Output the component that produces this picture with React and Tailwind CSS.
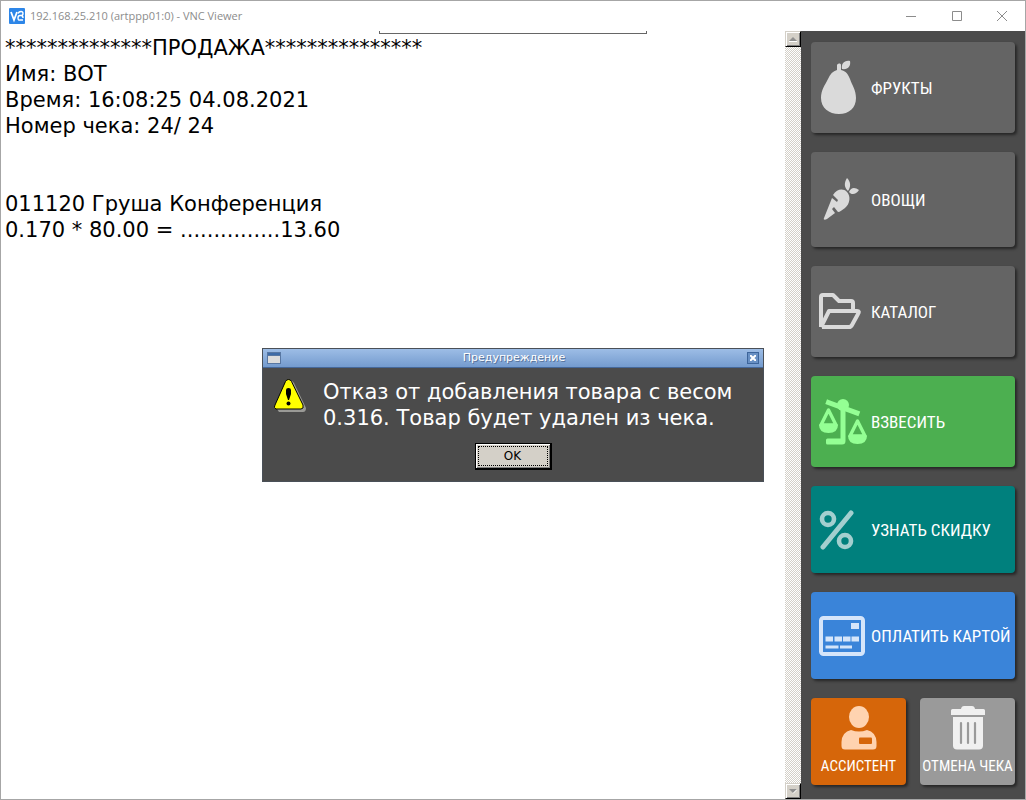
import React from "react";

const buttonBase =
  "flex shrink-0 items-center rounded text-left text-white shadow-[2px_2px_3px_rgba(0,0,0,0.5)]";
const labelFont =
  "font-['Roboto_Condensed','Open_Sans_Condensed','Liberation_Sans_Narrow','DejaVu_Sans_Condensed',sans-serif] whitespace-nowrap";

function PearIcon() {
  return (
    <svg className="ml-[2px]" width="36" height="56" viewBox="0 0 36 56" fill="#dadada" aria-hidden="true">
      <path d="M16 5c1-2 4-2 4 0v5c5 1 7 4 9 9 2 6 6 11 6 19 0 10-7 16-17 16S0 48 0 38c0-8 4-13 7-19 2-5 5-8 9-9z" />
      <path d="M21 9c-1-5 2-9 8-8 1 5-2 9-8 8z" />
    </svg>
  );
}

function CarrotIcon() {
  return (
    <svg className="ml-1" width="36" height="44" viewBox="0 0 36 44" fill="#dadada" aria-hidden="true">
      <path d="M1 40 9 20l5 4 1-2-5-5c4-6 10-7 14-3 4 4 3 12-2 16-3 2-5 4-7 4l-4-5-2 2 3 4-8 6c-2 1-4 1-3-1z" />
      <path d="M25 13c-4-4-4-8-1-13 4 4 4 9 1 13zM26 14c2-5 6-5 10-2-3 5-8 5-10 2z" />
    </svg>
  );
}

function FolderIcon() {
  return (
    <svg width="42" height="37" viewBox="0 0 42 37" fill="none" stroke="#dadada" strokeWidth="4" strokeLinejoin="round" aria-hidden="true">
      <path d="M2 34V4q0-2 2-2h10l6 6h12q2 0 2 2v6" />
      <path d="m2 34 8-16h28q3 0 1 3l-6 11q-1 2-3 2H3" />
    </svg>
  );
}

function ScalesIcon() {
  return (
    <svg width="48" height="46" viewBox="0 0 48 46" fill="#94ff94" aria-hidden="true">
      <circle cx="24" cy="6" r="6" />
      <path d="M9.500 3.500 38 14" stroke="#94ff94" strokeWidth="5" strokeLinecap="square" />
      <path d="M21.500 6h5v36q0 3.500-3.500 3.500H8.500q-1.500 0-1.500-1.500v-3q0-1.500 1.500-1.500h13z" />
      <path d="M9.500 11 2 26h15z" fill="none" stroke="#94ff94" strokeWidth="3.400" strokeLinejoin="round" />
      <path d="M0 25.500h19q0 8.500-9.500 8.500T0 25.500z" />
      <path d="M38.500 22 31 37h15z" fill="none" stroke="#94ff94" strokeWidth="3.400" strokeLinejoin="round" />
      <path d="M29 36.500h19q0 8.500-9.500 8.500T29 36.500z" />
    </svg>
  );
}

function PercentIcon() {
  return (
    <svg width="36" height="40" viewBox="0 0 36 40" fill="none" stroke="#a3cfcf" aria-hidden="true">
      <circle cx="9" cy="9" r="6" strokeWidth="4.600" />
      <circle cx="26" cy="31" r="6" strokeWidth="4.600" />
      <path d="M32 3 4 37" strokeWidth="5" strokeLinecap="round" />
    </svg>
  );
}

function CardIcon() {
  return (
    <svg width="46" height="40" viewBox="0 0 46 40" fill="#d5e5fa" aria-hidden="true">
      <rect x="2" y="2" width="42" height="36" rx="2.500" fill="none" stroke="#d5e5fa" strokeWidth="4" />
      <path d="M32 7h8v6h-8zM6.500 20.500h7.500v5H6.500zM15.500 20.500H23v5h-7.500zM24 20.500h7.500v5H24zM32.500 20.500H40v5h-7.500zM6.500 29.500h13v3h-13zM21 29.500h12v3H21z" />
    </svg>
  );
}

function AssistantIcon() {
  return (
    <svg width="36" height="44" viewBox="0 0 36 44" fill="#ffd3b0" aria-hidden="true">
      <ellipse cx="18" cy="11" rx="10" ry="11" />
      <path d="M10 24q8 3 16 0 9 2 9.500 12v4q0 3.500-3.500 3.500H4q-3.500 0-3.500-3.500v-4Q1 26 10 24z" />
      <rect x="18" y="31.500" width="13" height="6.500" rx="1" fill="#d6660a" />
    </svg>
  );
}

function TrashIcon() {
  return (
    <svg width="36" height="44" viewBox="0 0 36 44" fill="#f0f0f0" aria-hidden="true">
      <path d="M2.500 3H11q.5-3 3-3h8q2.500 0 3 3h8.500Q35 3 35 4.500V9H1V4.500Q1 3 2.500 3z" />
      <path d="M3 11h30v28.500q0 4-4 4H7q-4 0-4-4z" />
      <path d="M11 17v20M18 17v20M25 17v20" stroke="#9a9a9a" strokeWidth="2.200" strokeLinecap="round" />
    </svg>
  );
}

function MenuButton({ icon, label, className }) {
  return (
    <button type="button" className={`${buttonBase} w-full px-2 ${className}`}>
      <span className="flex w-[52px] shrink-0 items-center">{icon}</span>
      <span className={`${labelFont} text-[17px] leading-6`}>{label}</span>
    </button>
  );
}

function TileButton({ icon, label, className }) {
  return (
    <button
      type="button"
      className={`${buttonBase} h-[87px] flex-1 flex-col pt-2 ${className}`}
    >
      {icon}
      <span className={`${labelFont} mt-1 text-[15px] leading-6`}>{label}</span>
    </button>
  );
}

function ScrollButton({ down }) {
  return (
    <button
      type="button"
      aria-label={down ? "Вниз" : "Вверх"}
      className="flex h-4 w-4 items-center justify-center border border-t-[#d4d0c8] border-r-black border-b-black border-l-[#d4d0c8] bg-[#d4d0c8] shadow-[inset_1px_1px_0_white,inset_-1px_-1px_0_#808080]"
    >
      <svg width="8" height="5" viewBox="0 0 8 5" aria-hidden="true">
        <path d={down ? "M0 0h8L4 4z" : "M0 4h8L4 0z"} fill="#909090" />
        <path d={down ? "M4 4.500 8 .5" : "M0 4.500h8"} stroke="#fff" />
      </svg>
    </button>
  );
}

function TitleBar() {
  return (
    <header className="flex h-[30px] shrink-0 items-center bg-white">
      <svg className="ml-2" width="16" height="16" viewBox="0 0 16 16" fill="none" stroke="#fff" aria-hidden="true">
        <rect width="16" height="16" rx="1" fill="#2d86e8" stroke="none" />
        <path d="m2 4 3 8 3-8" strokeWidth="1.800" />
        <path d="M9 5.500q1-2 3-2t2 2-2 2h-1q-2 0-2 2.500t2 2h3M12 7.500q2 0 2 2.500" strokeWidth="1.400" />
      </svg>
      <h1 className="ml-[5px] font-['Open_Sans','Noto_Sans',sans-serif] text-[11px] leading-4 text-[#8c8c8c]">
        192.168.25.210 (artppp01:0) - VNC Viewer
      </h1>
      <div className="ml-auto flex h-full text-[#8c8c8c]">
        <button type="button" aria-label="Свернуть" className="flex w-[46px] items-center justify-center">
          <svg width="10" height="10" viewBox="0 0 10 10" stroke="currentColor"><path d="M0 5.500h10" /></svg>
        </button>
        <button type="button" aria-label="Развернуть" className="flex w-[45px] items-center justify-center">
          <svg width="10" height="10" viewBox="0 0 10 10" fill="none" stroke="currentColor"><path d="M.5.5h9v9h-9z" /></svg>
        </button>
        <button type="button" aria-label="Закрыть" className="flex w-[46px] items-center justify-center">
          <svg width="10" height="10" viewBox="0 0 10 10" stroke="currentColor"><path d="m0 0 10 10M10 0 0 10" /></svg>
        </button>
      </div>
    </header>
  );
}

function Receipt() {
  return (
    <section className="min-w-0 flex-1 bg-white px-1 pt-1 font-['DejaVu_Sans',sans-serif] text-[21px] leading-[26px] text-black">
      <p>**************ПРОДАЖА***************</p>
      <p>Имя: ВОТ</p>
      <p>Время: 16:08:25 04.08.2021</p>
      <p>Номер чека: 24/ 24</p>
      <div className="mt-[52px]">
        <p>011120 Груша Конференция</p>
        <p>0.170 * 80.00 = ...............13.60</p>
      </div>
    </section>
  );
}

function WarningDialog() {
  return (
    <div className="absolute inset-0 flex items-center justify-center">
      <div
        role="alertdialog"
        aria-labelledby="dialog-title"
        aria-describedby="dialog-text"
        className="w-[502px] border border-[#4a5058] bg-[#4b4b4b] font-['DejaVu_Sans',sans-serif]"
      >
        <div className="flex h-[19px] items-center border-b border-[#45689a] bg-linear-to-b from-[#9dbde6] to-[#749bce] px-1">
          <svg width="14" height="12" viewBox="0 0 14 12" aria-hidden="true">
            <path d="M0 0h14v12H0z" fill="#5877a2" />
            <path d="M1 4h12v7H1z" fill="#dcdcdc" />
            <path d="M1 1h12v2H1z" fill="#3e6ba7" />
          </svg>
          <h2 id="dialog-title" className="flex-1 text-center text-[11px] leading-4 text-white [text-shadow:1px_1px_0_#58749b]">
            Предупреждение
          </h2>
          <button type="button" aria-label="Закрыть" className="flex h-3 w-3 items-center justify-center border border-[#3d659b] bg-[#6890c4]">
            <svg width="6" height="6" viewBox="0 0 6 6" stroke="#fff" strokeWidth="2"><path d="m0 0 6 6M6 0 0 6" /></svg>
          </button>
        </div>
        <div className="flex gap-[17px] px-[11px] pt-[11px]">
          <svg className="shrink-0" width="32" height="33" viewBox="0 0 32 33" aria-hidden="true">
            <path d="M17 2q2 0 3 2l12 25q0 4-3 4H5l-2-3z" fill="#9a9a96" />
            <path d="M14.500 .5q2 0 3 2L29 26q1 4-2 4H2q-3-1-1-4L11.500 2.500q1-2 3-2z" fill="#ff0" stroke="#000" strokeWidth="1" />
            <path d="M12 11q0-2 2.500-2t2.500 2v4l-2 6h-1l-2-6z" />
            <circle cx="14.500" cy="24.500" r="2" />
          </svg>
          <p id="dialog-text" className="text-[21px] leading-[26px] text-white">
            Отказ от добавления товара с весом
            <br />
            0.316. Товар будет удален из чека.
          </p>
        </div>
        <div className="flex justify-center pt-3 pb-[11px]">
          <button
            type="button"
            className="h-[27px] w-[77px] border border-r-2 border-b-2 border-black bg-[#d4d0c8] p-[2px] text-[12px] leading-4 text-black shadow-[inset_1px_1px_0_white,inset_-1px_-1px_0_#808080]"
          >
            <span className="flex h-full items-center justify-center border border-dotted border-black">OK</span>
          </button>
        </div>
      </div>
    </div>
  );
}

export default function App() {
  return (
    <div className="flex min-h-screen flex-col border border-[#a6a6a6] bg-white">
      <TitleBar />
      <main className="relative flex flex-1">
        <Receipt />
        <div className="flex w-4 shrink-0 flex-col justify-between bg-[repeating-conic-gradient(#d4d0c8_0_25%,#ffffff_0_50%)] bg-[length:2px_2px]">
          <ScrollButton />
          <ScrollButton down />
        </div>
        <nav className="flex w-56 shrink-0 flex-col gap-[19px] bg-[#4b4b4b] px-[10px] pt-[11px] pb-[14px]">
          <MenuButton icon={<PearIcon />} label="ФРУКТЫ" className="h-[91px] bg-[#646464]" />
          <MenuButton icon={<CarrotIcon />} label="ОВОЩИ" className="h-[95px] bg-[#646464]" />
          <MenuButton icon={<FolderIcon />} label="КАТАЛОГ" className="h-[91px] bg-[#646464]" />
          <MenuButton icon={<ScalesIcon />} label="ВЗВЕСИТЬ" className="h-[91px] bg-[#4caf50]" />
          <MenuButton icon={<PercentIcon />} label="УЗНАТЬ СКИДКУ" className="h-[87px] bg-[#00807d]" />
          <MenuButton icon={<CardIcon />} label="ОПЛАТИТЬ КАРТОЙ" className="h-[87px] bg-[#3a84d9]" />
          <div className="flex gap-[14px]">
            <TileButton icon={<AssistantIcon />} label="АССИСТЕНТ" className="bg-[#d6660a]" />
            <TileButton icon={<TrashIcon />} label="ОТМЕНА ЧЕКА" className="bg-[#9a9a9a]" />
          </div>
        </nav>
        <div className="pointer-events-none absolute inset-x-0 top-0 flex justify-center">
          <div className="h-[3px] w-[268px] border border-t-0 border-[#666666]" />
        </div>
        <WarningDialog />
      </main>
    </div>
  );
}
